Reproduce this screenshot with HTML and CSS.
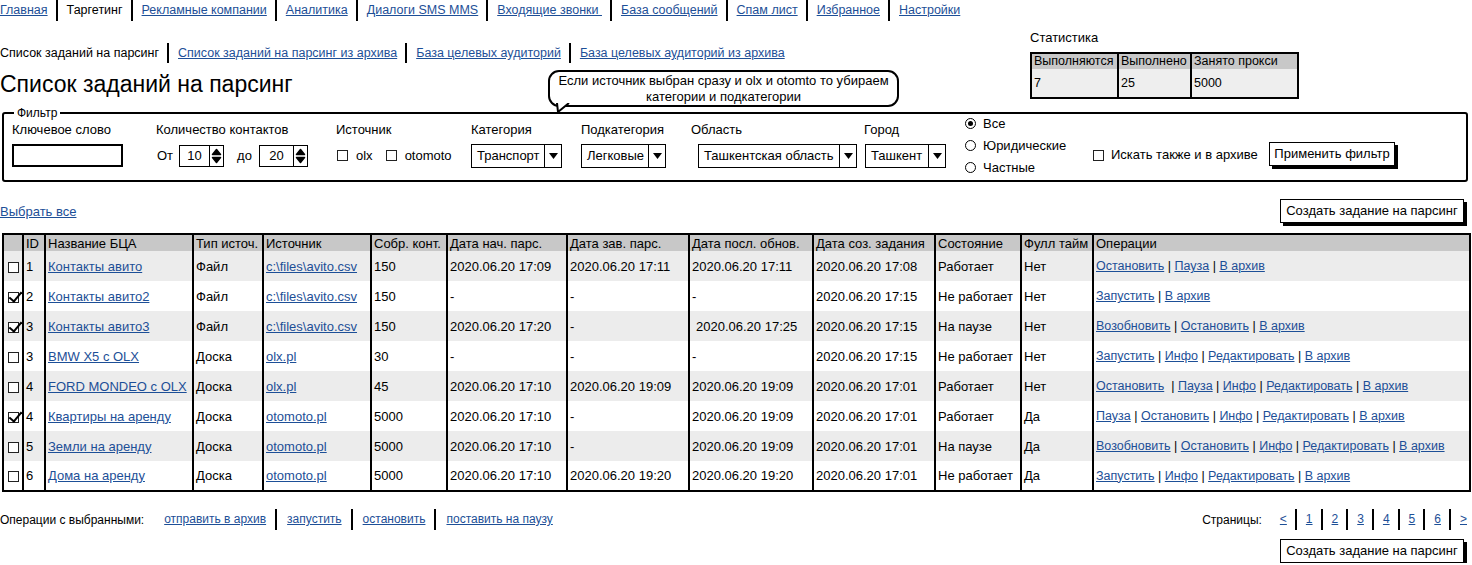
FILE: index.html
```html
<!DOCTYPE html>
<html lang="ru">
<head>
<meta charset="utf-8">
<title>Список заданий на парсинг</title>
<link rel="stylesheet" href="styles.css">
</head>
<body>
<nav class="sepnav topnav">
  <a href="#">Главная</a>
  <span>Таргетинг</span>
  <a href="#">Рекламные компании</a>
  <a href="#">Аналитика</a>
  <a href="#">Диалоги SMS MMS</a>
  <a href="#">Входящие звонки&nbsp;</a>
  <a href="#">База сообщений</a>
  <a href="#">Спам лист</a>
  <a href="#">Избранное</a>
  <a href="#">Настройки</a>
</nav>

<header class="head">
  <div class="head-main">
    <nav class="sepnav subnav">
      <span>Список заданий на парсинг</span>
      <a href="#">Список заданий на парсинг из архива</a>
      <a href="#">База целевых аудиторий</a>
      <a href="#">База целевых аудиторий из архива</a>
    </nav>
    <h1 class="title">Список заданий на парсинг</h1>
  </div>
  <div class="stats">
    <div class="stats-title">Статистика</div>
    <table class="stats-table">
      <colgroup><col class="sc1"><col class="sc2"><col class="sc3"></colgroup>
      <thead><tr><th>Выполняются</th><th>Выполнено</th><th>Занято прокси</th></tr></thead>
      <tbody><tr><td>7</td><td>25</td><td>5000</td></tr></tbody>
    </table>
  </div>
</header>

<div class="note">Если источник выбран сразу и olx и otomto то убираем<br>категории и подкатегории
  <svg class="note-tail" width="18" height="11" viewBox="0 0 18 11"><polygon points="3,0 4,9 15,0" fill="#fff"/><path d="M3 0 L4 9 L15 0" fill="none" stroke="#000" stroke-width="2" stroke-linejoin="round"/></svg>
</div>

<section class="filter">
  <span class="filter-legend">Фильтр</span>
  <div class="field">
    <span class="lbl">Ключевое слово</span>
    <span class="input"></span>
  </div>
  <div class="field">
    <span class="lbl">Количество контактов</span>
    <div class="ctrl count">
      <span class="from">От</span>
      <span class="spin w45"><span class="spin-val">10</span><span class="spin-arr"><svg width="11" height="16" viewBox="0 0 11 16"><path d="M5.5 1.5 L9.5 6.5 L1.5 6.5 Z M1.5 9.5 L9.5 9.5 L5.5 14.5 Z" fill="#000" stroke="#000" stroke-width="1.5" stroke-linejoin="round"/></svg></span></span>
      <span class="to">до</span>
      <span class="spin w49"><span class="spin-val">20</span><span class="spin-arr"><svg width="11" height="16" viewBox="0 0 11 16"><path d="M5.5 1.5 L9.5 6.5 L1.5 6.5 Z M1.5 9.5 L9.5 9.5 L5.5 14.5 Z" fill="#000" stroke="#000" stroke-width="1.5" stroke-linejoin="round"/></svg></span></span>
    </div>
  </div>
  <div class="field">
    <span class="lbl">Источник</span>
    <div class="ctrl src">
      <span class="cb"></span><span class="src-name">olx</span>
      <span class="cb"></span><span>otomoto</span>
    </div>
  </div>
  <div class="field">
    <span class="lbl">Категория</span>
    <span class="select w91"><span class="sel-val">Транспорт</span><span class="sel-arr"><svg width="9" height="6" viewBox="0 0 9 6"><path d="M0 0 H9 L4.5 6 Z" fill="#000"/></svg></span></span>
  </div>
  <div class="field">
    <span class="lbl">Подкатегория</span>
    <span class="select w85"><span class="sel-val">Легковые</span><span class="sel-arr"><svg width="9" height="6" viewBox="0 0 9 6"><path d="M0 0 H9 L4.5 6 Z" fill="#000"/></svg></span></span>
  </div>
  <div class="field">
    <span class="lbl">Область</span>
    <span class="select w159 shift7"><span class="sel-val">Ташкентская область</span><span class="sel-arr"><svg width="9" height="6" viewBox="0 0 9 6"><path d="M0 0 H9 L4.5 6 Z" fill="#000"/></svg></span></span>
  </div>
  <div class="field">
    <span class="lbl">Город</span>
    <span class="select w81 shift1"><span class="sel-val">Ташкент</span><span class="sel-arr"><svg width="9" height="6" viewBox="0 0 9 6"><path d="M0 0 H9 L4.5 6 Z" fill="#000"/></svg></span></span>
  </div>
  <div class="radios">
    <div class="radio"><span class="rb on"></span>Все</div>
    <div class="radio"><span class="rb"></span>Юридические</div>
    <div class="radio"><span class="rb"></span>Частные</div>
  </div>
  <div class="archive"><span class="cb"></span>Искать также и в архиве</div>
  <div class="apply"><span class="btn w126">Применить фильтр</span></div>
</section>

<div class="actions">
  <a href="#">Выбрать все</a>
  <span class="btn w184">Создать задание на парсинг</span>
</div>

<table class="grid">
  <colgroup>
    <col class="c-cb"><col class="c-id"><col class="c-name"><col class="c-type"><col class="c-src"><col class="c-cnt"><col class="c-d1"><col class="c-d2"><col class="c-d3"><col class="c-d4"><col class="c-state"><col class="c-full"><col class="c-ops">
  </colgroup>
  <thead>
    <tr><th></th><th>ID</th><th>Название БЦА</th><th>Тип источ.</th><th>Источник</th><th>Собр. конт.</th><th>Дата нач. парс.</th><th>Дата зав. парс.</th><th>Дата посл. обнов.</th><th>Дата соз. задания</th><th>Состояние</th><th>Фулл тайм</th><th>Операции</th></tr>
  </thead>
  <tbody>
    <tr><td class="cbc"><span class="cb"></span></td><td>1</td><td><a href="#">Контакты авито</a></td><td>Файл</td><td><a href="#">c:\files\avito.csv</a></td><td>150</td><td>2020.06.20 17:09</td><td>2020.06.20 17:11</td><td>2020.06.20 17:11</td><td>2020.06.20 17:08</td><td>Работает</td><td>Нет</td><td class="ops"><a href="#">Остановить</a> | <a href="#">Пауза</a> | <a href="#">В архив</a></td></tr>
    <tr><td class="cbc"><span class="cb on"></span></td><td>2</td><td><a href="#">Контакты авито2</a></td><td>Файл</td><td><a href="#">c:\files\avito.csv</a></td><td>150</td><td>-</td><td>-</td><td>-</td><td>2020.06.20 17:15</td><td>Не работает</td><td>Нет</td><td class="ops"><a href="#">Запустить</a> | <a href="#">В архив</a></td></tr>
    <tr><td class="cbc"><span class="cb on"></span></td><td>3</td><td><a href="#">Контакты авито3</a></td><td>Файл</td><td><a href="#">c:\files\avito.csv</a></td><td>150</td><td>2020.06.20 17:20</td><td>-</td><td class="indent">2020.06.20 17:25</td><td>2020.06.20 17:15</td><td>На паузе</td><td>Нет</td><td class="ops"><a href="#">Возобновить</a> | <a href="#">Остановить</a> | <a href="#">В архив</a></td></tr>
    <tr><td class="cbc"><span class="cb"></span></td><td>3</td><td><a href="#">BMW X5 c OLX</a></td><td>Доска</td><td><a href="#">olx.pl</a></td><td>30</td><td>-</td><td>-</td><td>-</td><td>2020.06.20 17:15</td><td>Не работает</td><td>Нет</td><td class="ops"><a href="#">Запустить</a> | <a href="#">Инфо</a> | <a href="#">Редактировать</a> | <a href="#">В архив</a></td></tr>
    <tr><td class="cbc"><span class="cb"></span></td><td>4</td><td><a href="#">FORD MONDEO c OLX</a></td><td>Доска</td><td><a href="#">olx.pl</a></td><td>45</td><td>2020.06.20 17:10</td><td>2020.06.20 19:09</td><td>2020.06.20 19:09</td><td>2020.06.20 17:01</td><td>Работает</td><td>Нет</td><td class="ops"><a href="#">Остановить</a> &nbsp;| <a href="#">Пауза</a> | <a href="#">Инфо</a> | <a href="#">Редактировать</a> | <a href="#">В архив</a></td></tr>
    <tr><td class="cbc"><span class="cb on"></span></td><td>4</td><td><a href="#">Квартиры на аренду</a></td><td>Доска</td><td><a href="#">otomoto.pl</a></td><td>5000</td><td>2020.06.20 17:10</td><td>-</td><td>2020.06.20 19:09</td><td>2020.06.20 17:01</td><td>Работает</td><td>Да</td><td class="ops"><a href="#">Пауза</a> | <a href="#">Остановить</a> | <a href="#">Инфо</a> | <a href="#">Редактировать</a> | <a href="#">В архив</a></td></tr>
    <tr><td class="cbc"><span class="cb"></span></td><td>5</td><td><a href="#">Земли на аренду</a></td><td>Доска</td><td><a href="#">otomoto.pl</a></td><td>5000</td><td>2020.06.20 17:10</td><td>-</td><td>2020.06.20 19:09</td><td>2020.06.20 17:01</td><td>На паузе</td><td>Да</td><td class="ops"><a href="#">Возобновить</a> | <a href="#">Остановить</a> | <a href="#">Инфо</a> | <a href="#">Редактировать</a> | <a href="#">В архив</a></td></tr>
    <tr><td class="cbc"><span class="cb"></span></td><td>6</td><td><a href="#">Дома на аренду</a></td><td>Доска</td><td><a href="#">otomoto.pl</a></td><td>5000</td><td>2020.06.20 17:10</td><td>2020.06.20 19:20</td><td>2020.06.20 19:20</td><td>2020.06.20 17:01</td><td>Не работает</td><td>Да</td><td class="ops"><a href="#">Запустить</a> | <a href="#">Инфо</a> | <a href="#">Редактировать</a> | <a href="#">В архив</a></td></tr>
  </tbody>
</table>

<div class="bulk">
  <div class="bulk-ops">
    <span class="bulk-label">Операции с выбранными:</span>
    <nav class="sepnav small">
      <a href="#">отправить в архив</a>
      <a href="#">запустить</a>
      <a href="#">остановить</a>
      <a href="#">поставить на паузу</a>
    </nav>
  </div>
  <div class="pager">
    <span class="pager-label">Страницы:</span>
    <nav class="sepnav small pages">
      <a href="#">&lt;</a>
      <a href="#">1</a>
      <a href="#">2</a>
      <a href="#">3</a>
      <a href="#">4</a>
      <a href="#">5</a>
      <a href="#">6</a>
      <a href="#">&gt;</a>
    </nav>
  </div>
</div>

<div class="bottom">
  <span class="btn w184">Создать задание на парсинг</span>
</div>
</body>
</html>
```

FILE: styles.css
```css
* { box-sizing: border-box; }
body {
  margin: 0;
  font-family: "Liberation Sans", Arial, sans-serif;
  font-size: 13px;
  color: #000;
  background: #fff;
}
a { color: #1d4f97; text-decoration: underline; }

.sepnav { display: flex; align-items: stretch; }
.sepnav > * { padding: 0 8px 0 9px; border-left: 2px solid #000; white-space: nowrap; }
.sepnav > *:first-child { border-left: 0; padding-left: 0; }
.sepnav > *:last-child { padding-right: 0; }

.topnav { height: 21px; line-height: 21px; font-size: 12.5px; }

.head { display: grid; grid-template-columns: 1030px 267px; }
.head-main { padding-top: 22px; }
.subnav { height: 20px; line-height: 20px; font-size: 12.5px; }
.title { margin: 8px 0 0; font-size: 23px; font-weight: normal; line-height: 26px; }

.stats { padding-top: 9px; }
.stats-title { line-height: 16px; margin-bottom: 6px; }
.stats-table { border-collapse: collapse; border: 2px solid #000; width: 267px; table-layout: fixed; font-size: 12.5px; }
.sc1 { width: 87px; } .sc2 { width: 73px; } .sc3 { width: 107px; }
.stats-table th { background: #c8c8c8; height: 16px; font-weight: normal; text-align: left; padding: 0 2px; border-left: 2px solid #000; line-height: 15px; white-space: nowrap; }
.stats-table td { background: #eeeeee; height: 29px; padding: 0 2px; border-left: 2px solid #000; }

.note {
  position: absolute; left: 548px; top: 70px;
  width: 351px; height: 37px;
  border: 2px solid #000; border-radius: 11px;
  background: #fff; text-align: center;
  line-height: 16px; padding-top: 1px;
}
.note-tail { position: absolute; left: 4px; top: 100%; margin-top: -2px; }

.filter {
  position: relative;
  margin: 13px 4px 0 2px;
  height: 70px;
  border: 2px solid #000; border-radius: 3px;
  display: grid;
  grid-template-columns: 144px 180px 135px 110px 110px 173px 101px 128px 176px auto;
  padding: 8px 0 0 8px;
  align-items: start;
}
.filter-legend { position: absolute; left: 10px; top: -9px; background: #fff; padding: 0 3px; font-size: 12px; line-height: 16px; }
.field { display: flex; flex-direction: column; align-items: flex-start; }
.lbl { display: block; line-height: 16px; margin-bottom: 6px; white-space: nowrap; }
.ctrl { display: flex; align-items: center; height: 23px; }

.input { display: block; width: 111px; height: 23px; border: 2px solid #000; background: #fff; }

.count .from { margin-left: 1px; margin-right: 6px; }
.count .to { margin: 0 7px 0 13px; }
.spin { display: inline-flex; height: 22px; border: 1.5px solid #000; background: #fff; align-items: stretch; }
.spin.w45 { width: 45px; } .spin.w49 { width: 49px; }
.spin-val { flex: 1; text-align: center; line-height: 19px; }
.spin-arr { width: 14px; border-left: 1.5px solid #000; display: flex; align-items: center; justify-content: center; }

.src .cb { margin-left: 1px; margin-right: 8px; }
.src .src-name { margin-right: 12px; }

.select { display: inline-flex; align-items: stretch; height: 24px; border: 1.5px solid #000; background: #fff; }
.select.w91 { width: 91px; } .select.w85 { width: 85px; } .select.w159 { width: 159px; } .select.w81 { width: 81px; }
.select.shift7 { margin-left: 7px; } .select.shift1 { margin-left: 1px; }
.sel-val { flex: 1; padding: 0 5px; white-space: nowrap; line-height: 21px; overflow: hidden; }
.sel-arr { width: 17px; border-left: 1.5px solid #000; display: flex; align-items: center; justify-content: center; }

.radios { margin-top: -10px; }
.radio { display: flex; align-items: center; height: 22px; white-space: nowrap; }
.rb { position: relative; display: inline-block; width: 11px; height: 11px; border: 1px solid #000; border-radius: 50%; background: #fff; margin-right: 7px; }
.rb.on::after { content: ""; position: absolute; left: 2px; top: 2px; width: 5px; height: 5px; border-radius: 50%; background: #000; }

.cb { position: relative; display: inline-block; width: 11px; height: 11px; border: 1px solid #222; background: #fff; vertical-align: middle; }
.cb.on::after { content: ""; position: absolute; left: 3px; top: -4px; width: 5px; height: 11px; border-right: 2px solid #000; border-bottom: 2px solid #000; transform: rotate(40deg); }

.archive { margin-top: 25px; line-height: 16px; display: flex; align-items: center; white-space: nowrap; }
.archive .cb { margin-right: 7px; }
.apply { margin-top: 20px; }

.btn { display: inline-block; height: 24px; line-height: 21px; border: 1.5px solid #000; background: #fff; box-shadow: 3px 3px 0 #000; text-align: center; white-space: nowrap; }
.btn.w126 { width: 126px; }
.btn.w184 { width: 184px; }

.actions { display: flex; justify-content: space-between; align-items: center; height: 24px; margin: 17px 8px 0 0; }

.grid { margin: 10px 3px 0 2px; width: 1467px; border-collapse: collapse; border: 2px solid #000; table-layout: fixed; }
.c-cb { width: 20px; } .c-id { width: 22px; } .c-name { width: 148px; } .c-type { width: 70px; } .c-src { width: 108px; }
.c-cnt { width: 76px; } .c-d1 { width: 120px; } .c-d2 { width: 122px; } .c-d3 { width: 124px; } .c-d4 { width: 122px; }
.c-state { width: 86px; } .c-full { width: 72px; } .c-ops { width: 377px; }
.grid th { background: #c8c8c8; height: 17px; line-height: 15px; font-weight: normal; text-align: left; padding: 0 2px; border-left: 2px solid #000; white-space: nowrap; overflow: hidden; }
.grid td { height: 30px; padding: 0 2px; border-left: 2px solid #000; white-space: nowrap; overflow: hidden; vertical-align: middle; }
.grid tbody tr:nth-child(odd) td { background: #ececec; }
.grid td.cbc { text-align: center; padding: 0; }
.grid td.indent { padding-left: 6px; }
.grid td.ops { font-size: 12.5px; }

.bulk { display: flex; justify-content: space-between; align-items: center; height: 21px; margin: 17px 5px 0 0; font-size: 12px; }
.bulk .sepnav { height: 21px; line-height: 21px; }
.bulk .sepnav > * { padding: 0 9px 0 10px; }
.bulk .sepnav.pages > * { padding: 0 8px 0 9px; }
.bulk .sepnav > *:first-child { padding-left: 0; }
.bulk .sepnav > *:last-child { padding-right: 0; }
.bulk-ops, .pager { display: flex; align-items: center; }
.bulk-label { margin-right: 20px; }
.pager-label { margin-right: 18px; }

.bottom { display: flex; justify-content: flex-end; margin: 9px 8px 0 0; }
```
